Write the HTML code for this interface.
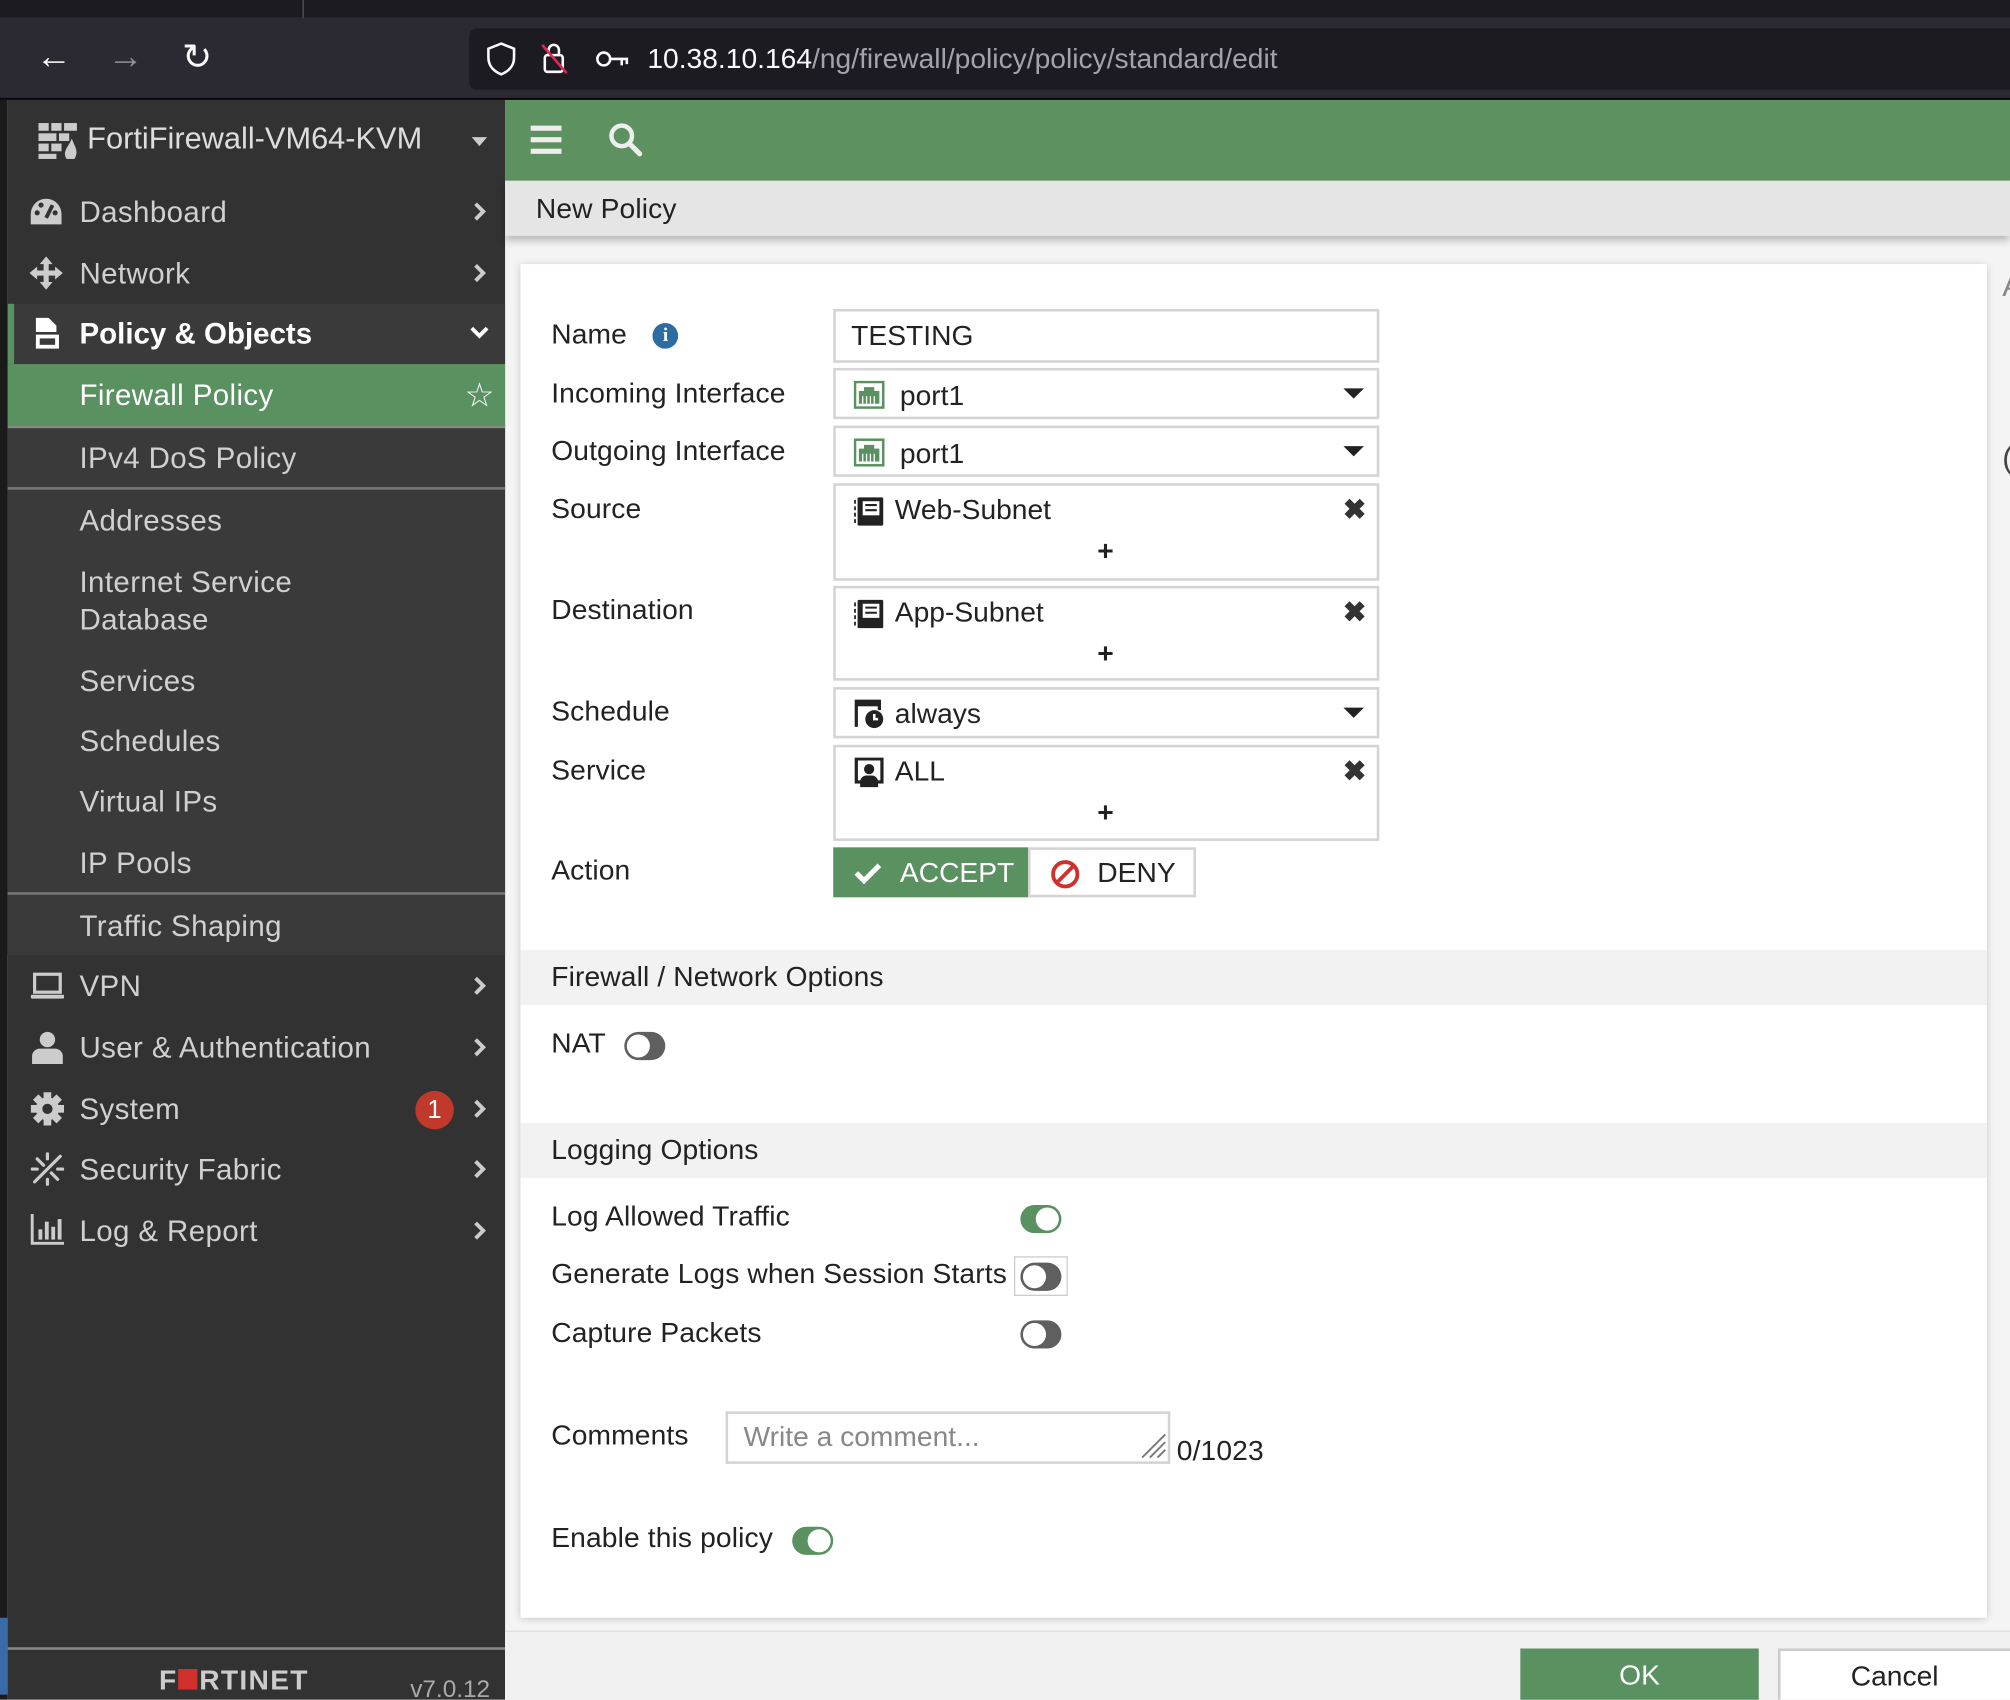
<!DOCTYPE html>
<html><head><meta charset="utf-8"><style>
*{box-sizing:border-box;margin:0;padding:0}
html,body{width:2010px;height:1700px;overflow:hidden;background:#f4f4f4}
#w{width:1568px;height:1326px;position:relative;transform:scale(1.28189);transform-origin:0 0;font-family:"Liberation Sans",sans-serif;overflow:hidden;background:#f4f4f4}
.a{position:absolute}
.sb{color:#d0d0d0;font-size:23px;letter-spacing:0.3px}
.mi{position:absolute;left:6px;width:388px;height:48px;line-height:48px}
.mi .t{position:absolute;left:56px}
.mi .ch{position:absolute;right:14px;top:16px;width:12px;height:16px}
.lbl{position:absolute;left:430px;font-size:22px;color:#222;letter-spacing:0.1px}
.inp{position:absolute;left:650px;width:426px;border:2px solid #d4d4d4;background:#fff;font-size:22px;color:#222}
.tg{position:absolute;width:32px;height:22px;border-radius:11px}
.tg.on{background:#5a9160}
.tg.on:after{content:"";position:absolute;right:2px;top:2px;width:18px;height:18px;border-radius:50%;background:#fff}
.tg.off{background:#5f5f5f}
.tg.off:after{content:"";position:absolute;left:2px;top:2px;width:18px;height:18px;border-radius:50%;background:#fff}
.caret{position:absolute;right:10px;top:14px;width:0;height:0;border-left:8px solid transparent;border-right:8px solid transparent;border-top:8px solid #222}
.x{position:absolute;right:8px;top:6px;font-size:22px;font-weight:bold;color:#333}
.plus{position:absolute;left:204px;top:38px;font-size:22px;font-weight:bold;color:#222}
</style></head><body><div id="w">
<div class="a" style="left:0;top:0;width:1568px;height:14px;background:#1c1b22"></div>
<div class="a" style="left:236px;top:0;width:1px;height:14px;background:#555"></div>
<div class="a" style="left:0;top:14px;width:1568px;height:62px;background:#2b2a33"></div>
<div class="a" style="left:0;top:76px;width:1568px;height:2px;background:#0c0c0d"></div>
<div class="a" style="left:28px;top:28px;color:#fbfbfe;font-size:28px">&#8592;</div>
<div class="a" style="left:84px;top:28px;color:#8f8f9d;font-size:28px">&#8594;</div>
<div class="a" style="left:142px;top:28px;color:#fbfbfe;font-size:28px">&#8635;</div>
<div class="a" style="left:366px;top:22px;width:1210px;height:48px;background:#1c1b22;border-radius:6px"></div>
<svg class="a" style="left:378px;top:32px" width="26" height="28" viewBox="0 0 26 28"><path d="M13 2 L23 6 V13 C23 20 18 24 13 26 C8 24 3 20 3 13 V6 Z" fill="none" stroke="#fbfbfe" stroke-width="2"/></svg>
<svg class="a" style="left:420px;top:31px" width="26" height="28" viewBox="0 0 26 28"><rect x="5" y="12" width="14" height="13" rx="2" fill="none" stroke="#fbfbfe" stroke-width="2"/><path d="M8 12 V8 a4 4 0 0 1 8 0 V12" fill="none" stroke="#fbfbfe" stroke-width="2"/><path d="M3 4 L22 26" stroke="#e22850" stroke-width="2"/></svg>
<svg class="a" style="left:464px;top:36px" width="28" height="20" viewBox="0 0 28 20"><circle cx="7" cy="10" r="5" fill="none" stroke="#fbfbfe" stroke-width="2"/><path d="M12 10 H26 M21 10 V15 M25 10 V14" stroke="#fbfbfe" stroke-width="2"/></svg>
<div class="a" style="left:505px;top:33px;font-size:22px;color:#fbfbfe;letter-spacing:0px">10.38.10.164<span style="color:#a3a3ad">/ng/firewall/policy/policy/standard/edit</span></div>
<div class="a" style="left:0;top:78px;width:6px;height:1248px;background:#1a1a1a"></div>
<div class="a" style="left:0;top:1262px;width:6px;height:60px;background:#3b6aa8"></div>
<div class="a sb" style="left:6px;top:78px;width:388px;height:1248px;background:#323232"></div>
<div class="a" style="left:6px;top:332px;width:388px;height:413px;background:#3a3a3a"></div>
<div class="a" style="left:6px;top:237px;width:388px;height:47px;background:#3a3a3a"></div>
<div class="a" style="left:6px;top:237px;width:5px;height:47px;background:#5a9160"></div>
<div class="a" style="left:6px;top:284px;width:388px;height:48px;background:#5a9160"></div>
<div class="a" style="left:6px;top:332px;width:388px;height:2px;background:#888"></div>
<div class="a" style="left:6px;top:380px;width:388px;height:2px;background:#777"></div>
<div class="a" style="left:6px;top:696px;width:388px;height:2px;background:#777"></div>
<svg class="a" style="left:30px;top:96px" width="32" height="28" viewBox="0 0 32 28"><g fill="#ccc"><rect x="0" y="0" width="8" height="6"/><rect x="10" y="0" width="8" height="6"/><rect x="20" y="0" width="10" height="6"/><rect x="0" y="8" width="14" height="6"/><rect x="16" y="8" width="8" height="6"/><rect x="0" y="16" width="8" height="6"/><rect x="10" y="16" width="8" height="6"/><rect x="0" y="24" width="14" height="4"/></g><path d="M22 28 C18 22 24 18 26 12 C28 18 32 22 28 28Z" fill="#ccc"/></svg>
<div class="a sb" style="left:68px;top:95px;font-size:24px;color:#ddd;letter-spacing:0">FortiFirewall-VM64-KVM</div>
<div class="a" style="left:368px;top:107px;border-left:6px solid transparent;border-right:6px solid transparent;border-top:7px solid #ccc"></div>
<div class="sb">
<div class="mi" style="top:141px"><svg class="a" style="left:17px;top:13px" width="26" height="22" viewBox="0 0 26 22"><path d="M13 1 A12 12 0 0 0 1 13 V21 H25 V13 A12 12 0 0 0 13 1Z" fill="#ccc"/><path d="M13 16 L18 6" stroke="#323232" stroke-width="3"/><circle cx="6" cy="12" r="2" fill="#323232"/><circle cx="9" cy="6" r="2" fill="#323232"/><circle cx="20" cy="12" r="2" fill="#323232"/></svg><span class="t">Dashboard</span><svg class="ch" viewBox="0 0 12 16"><path d="M3 2 L9 8 L3 14" fill="none" stroke="#ccc" stroke-width="3"/></svg></div>
<div class="mi" style="top:189px"><svg class="a" style="left:17px;top:11px" width="26" height="26" viewBox="0 0 26 26"><path d="M13 0 L18 6 H15 V11 H20 V8 L26 13 L20 18 V15 H15 V20 H18 L13 26 L8 20 H11 V15 H6 V18 L0 13 L6 8 V11 H11 V6 H8Z" fill="#ccc"/></svg><span class="t">Network</span><svg class="ch" viewBox="0 0 12 16"><path d="M3 2 L9 8 L3 14" fill="none" stroke="#ccc" stroke-width="3"/></svg></div>
<div class="mi" style="top:236px;color:#fff;font-weight:bold;letter-spacing:0"><svg class="a" style="left:20px;top:11px" width="22" height="26" viewBox="0 0 22 26"><path d="M2 1 H12 L18 7 V12 H2Z M2 14 H20 V25 H2Z" fill="#fff"/><rect x="5" y="17" width="12" height="5" fill="#3a3a3a"/></svg><span class="t">Policy &amp; Objects</span><svg class="a" style="right:12px;top:17px" width="16" height="12" viewBox="0 0 16 12"><path d="M2 3 L8 9 L14 3" fill="none" stroke="#fff" stroke-width="3"/></svg></div>
<div class="mi" style="top:284px;color:#fff"><span class="t">Firewall Policy</span><span class="a" style="right:8px;top:0;font-size:26px">&#9734;</span></div>
<div class="mi" style="top:333px"><span class="t">IPv4 DoS Policy</span></div>
<div class="mi" style="top:382px"><span class="t">Addresses</span></div>
<div class="mi" style="top:440px;line-height:29px;height:60px"><span class="t">Internet Service<br>Database</span></div>
<div class="mi" style="top:507px"><span class="t">Services</span></div>
<div class="mi" style="top:554px"><span class="t">Schedules</span></div>
<div class="mi" style="top:601px"><span class="t">Virtual IPs</span></div>
<div class="mi" style="top:649px"><span class="t">IP Pools</span></div>
<div class="mi" style="top:698px"><span class="t">Traffic Shaping</span></div>
<div class="mi" style="top:745px"><svg class="a" style="left:18px;top:13px" width="26" height="22" viewBox="0 0 26 22"><rect x="3" y="2" width="20" height="14" fill="none" stroke="#ccc" stroke-width="2.5"/><rect x="0" y="18" width="26" height="3" rx="1" fill="#ccc"/></svg><span class="t">VPN</span><svg class="ch" viewBox="0 0 12 16"><path d="M3 2 L9 8 L3 14" fill="none" stroke="#ccc" stroke-width="3"/></svg></div>
<div class="mi" style="top:793px"><svg class="a" style="left:18px;top:11px" width="26" height="26" viewBox="0 0 26 26"><circle cx="13" cy="7" r="6" fill="#ccc"/><path d="M1 26 V20 A6 6 0 0 1 7 14 H19 A6 6 0 0 1 25 20 V26Z" fill="#ccc"/></svg><span class="t">User &amp; Authentication</span><svg class="ch" viewBox="0 0 12 16"><path d="M3 2 L9 8 L3 14" fill="none" stroke="#ccc" stroke-width="3"/></svg></div>
<div class="mi" style="top:841px"><svg class="a" style="left:18px;top:11px" width="26" height="26" viewBox="0 0 26 26"><g fill="#ccc"><circle cx="13" cy="13" r="9"/><rect x="10" y="0" width="6" height="26"/><rect x="0" y="10" width="26" height="6"/><rect x="10" y="0" width="6" height="26" transform="rotate(45 13 13)"/><rect x="10" y="0" width="6" height="26" transform="rotate(-45 13 13)"/></g><circle cx="13" cy="13" r="4" fill="#323232"/></svg><span class="t">System</span><span class="a" style="left:318px;top:10px;width:30px;height:30px;border-radius:50%;background:#c0392b;color:#fff;text-align:center;line-height:30px;font-size:20px;letter-spacing:0">1</span><svg class="ch" viewBox="0 0 12 16"><path d="M3 2 L9 8 L3 14" fill="none" stroke="#ccc" stroke-width="3"/></svg></div>
<div class="mi" style="top:888px"><svg class="a" style="left:18px;top:11px" width="26" height="26" viewBox="0 0 26 26"><g stroke="#ccc" stroke-width="2.5" stroke-linecap="round"><path d="M3 23 L23 3 M5 5 L10 10 M16 16 L21 21 M13 1 V5 M1 13 H5 M21 13 H25 M13 21 V25"/></g></svg><span class="t">Security Fabric</span><svg class="ch" viewBox="0 0 12 16"><path d="M3 2 L9 8 L3 14" fill="none" stroke="#ccc" stroke-width="3"/></svg></div>
<div class="mi" style="top:936px"><svg class="a" style="left:18px;top:11px" width="26" height="24" viewBox="0 0 26 24"><path d="M1 0 V23 H26" fill="none" stroke="#ccc" stroke-width="2.5"/><g fill="#ccc"><rect x="6" y="12" width="3" height="8"/><rect x="11" y="6" width="3" height="14"/><rect x="16" y="10" width="3" height="10"/><rect x="21" y="4" width="3" height="16"/></g></svg><span class="t">Log &amp; Report</span><svg class="ch" viewBox="0 0 12 16"><path d="M3 2 L9 8 L3 14" fill="none" stroke="#ccc" stroke-width="3"/></svg></div>
</div>
<div class="a" style="left:6px;top:1285px;width:388px;height:2px;background:#888"></div>
<div class="a" style="left:124px;top:1298px;font-size:22px;font-weight:bold;color:#ccc;letter-spacing:1px">F<span style="display:inline-block;width:15px;height:16px;background:#d0312d;margin:0 1px"></span>RTINET</div>
<div class="a" style="left:320px;top:1308px;font-size:19px;color:#aaa">v7.0.12</div>
<div class="a" style="left:394px;top:78px;width:1174px;height:63px;background:#5d9160"></div>
<div class="a" style="left:414px;top:98px;width:24px;height:4px;background:#eee;box-shadow:0 9px 0 #eee,0 18px 0 #eee"></div>
<svg class="a" style="left:474px;top:95px" width="28" height="28" viewBox="0 0 28 28"><circle cx="11" cy="11" r="8" fill="none" stroke="#eee" stroke-width="3.5"/><path d="M17 17 L25 25" stroke="#eee" stroke-width="4" stroke-linecap="round"/></svg>
<div class="a" style="left:394px;top:141px;width:1174px;height:43px;background:#e5e5e5;box-shadow:0 4px 6px rgba(0,0,0,.25)"></div>
<div class="a" style="left:418px;top:150px;font-size:22px;color:#222;letter-spacing:0.1px">New Policy</div>
<div class="a" style="left:406px;top:206px;width:1144px;height:1056px;background:#fff;box-shadow:0 1px 6px rgba(0,0,0,.2)"></div>
<div class="a" style="left:1562px;top:210px;font-size:24px;color:#888">A</div>
<div class="a" style="left:1562px;top:344px;font-size:24px;color:#444">(</div>
<div class="lbl" style="top:248px">Name <span style="display:inline-block;width:20px;height:20px;border-radius:50%;background:#2d6ca2;color:#fff;font-size:15px;font-weight:bold;text-align:center;line-height:20px;vertical-align:2px;margin-left:14px;font-family:'Liberation Serif',serif">i</span></div>
<div class="inp" style="top:241px;height:42px;padding:6px 12px">TESTING</div>
<div class="lbl" style="top:294px">Incoming Interface</div>
<div class="inp" style="top:287px;height:40px"><svg class="a" style="left:14px;top:8px" width="24" height="22" viewBox="0 0 24 22"><rect x="1" y="1" width="22" height="20" fill="#fff" stroke="#5a9160" stroke-width="2"/><path d="M4 8 H8 V5 H16 V8 H20 V18 H4Z" fill="#5a9160"/><path d="M7 12 V18 M10 12 V18 M13 12 V18 M16 12 V18" stroke="#fff" stroke-width="1"/></svg><span class="a" style="left:50px;top:7px">port1</span><span class="caret"></span></div>
<div class="lbl" style="top:339px">Outgoing Interface</div>
<div class="inp" style="top:332px;height:40px"><svg class="a" style="left:14px;top:8px" width="24" height="22" viewBox="0 0 24 22"><rect x="1" y="1" width="22" height="20" fill="#fff" stroke="#5a9160" stroke-width="2"/><path d="M4 8 H8 V5 H16 V8 H20 V18 H4Z" fill="#5a9160"/><path d="M7 12 V18 M10 12 V18 M13 12 V18 M16 12 V18" stroke="#fff" stroke-width="1"/></svg><span class="a" style="left:50px;top:7px">port1</span><span class="caret"></span></div>
<div class="lbl" style="top:384px">Source</div>
<div class="inp" style="top:377px;height:76px"><svg class="a" style="left:14px;top:8px" width="24" height="24" viewBox="0 0 24 24"><rect x="3" y="1" width="20" height="22" rx="1" fill="#222"/><rect x="7" y="4" width="13" height="11" fill="#fff"/><path d="M9 7 H18 M9 11 H18" stroke="#222" stroke-width="1.6"/><path d="M1 3 V21" stroke="#222" stroke-width="1.4" stroke-dasharray="3 2"/></svg><span class="a" style="left:46px;top:6px">Web-Subnet</span><span class="x">&#10006;</span><span class="plus">+</span></div>
<div class="lbl" style="top:463px">Destination</div>
<div class="inp" style="top:457px;height:74px"><svg class="a" style="left:14px;top:8px" width="24" height="24" viewBox="0 0 24 24"><rect x="3" y="1" width="20" height="22" rx="1" fill="#222"/><rect x="7" y="4" width="13" height="11" fill="#fff"/><path d="M9 7 H18 M9 11 H18" stroke="#222" stroke-width="1.6"/><path d="M1 3 V21" stroke="#222" stroke-width="1.4" stroke-dasharray="3 2"/></svg><span class="a" style="left:46px;top:6px">App-Subnet</span><span class="x">&#10006;</span><span class="plus">+</span></div>
<div class="lbl" style="top:542px">Schedule</div>
<div class="inp" style="top:536px;height:40px"><svg class="a" style="left:14px;top:7px" width="24" height="24" viewBox="0 0 24 24"><path d="M2 22 V2 H20 V9" fill="none" stroke="#222" stroke-width="2.5"/><rect x="2" y="2" width="18" height="4" fill="#222"/><circle cx="16" cy="16" r="7" fill="#222"/><path d="M16 12 V16 H19" stroke="#fff" stroke-width="2" fill="none"/></svg><span class="a" style="left:46px;top:6px">always</span><span class="caret"></span></div>
<div class="lbl" style="top:588px">Service</div>
<div class="inp" style="top:581px;height:75px"><svg class="a" style="left:14px;top:8px" width="24" height="24" viewBox="0 0 24 24"><rect x="2" y="1" width="20" height="18" fill="none" stroke="#222" stroke-width="2.5"/><circle cx="12" cy="9" r="4" fill="#222"/><path d="M5 23 V19 A5 5 0 0 1 10 14 H14 A5 5 0 0 1 19 19 V23Z" fill="#222"/></svg><span class="a" style="left:46px;top:6px">ALL</span><span class="x">&#10006;</span><span class="plus">+</span></div>
<div class="lbl" style="top:666px">Action</div>
<div class="a" style="left:650px;top:661px;width:153px;height:39px;background:#5a9160;color:#fff;font-size:22px;line-height:39px"><svg class="a" style="left:16px;top:11px" width="22" height="18" viewBox="0 0 22 18"><path d="M2 9 L8 15 L20 3" fill="none" stroke="#fff" stroke-width="4"/></svg><span class="a" style="left:52px">ACCEPT</span></div>
<div class="a" style="left:802px;top:661px;width:131px;height:39px;border:2px solid #d4d4d4;background:#fff;font-size:22px;line-height:35px;color:#222"><svg class="a" style="left:15px;top:7px" width="24" height="24" viewBox="0 0 24 24"><circle cx="12" cy="12" r="9.5" fill="none" stroke="#d0312d" stroke-width="3"/><path d="M5 19 L19 5" stroke="#d0312d" stroke-width="3"/></svg><span class="a" style="left:52px">DENY</span></div>
<div class="a" style="left:406px;top:741px;width:1144px;height:43px;background:#f2f2f2"></div>
<div class="lbl" style="top:749px">Firewall / Network Options</div>
<div class="lbl" style="top:801px">NAT</div>
<div class="tg off" style="left:487px;top:805px"></div>
<div class="a" style="left:406px;top:876px;width:1144px;height:43px;background:#f2f2f2"></div>
<div class="lbl" style="top:884px">Logging Options</div>
<div class="lbl" style="top:936px">Log Allowed Traffic</div>
<div class="tg on" style="left:796px;top:940px"></div>
<div class="lbl" style="top:981px">Generate Logs when Session Starts</div>
<div class="a" style="left:791px;top:980px;width:42px;height:31px;border:1px solid #ccc"></div>
<div class="tg off" style="left:796px;top:985px"></div>
<div class="lbl" style="top:1027px">Capture Packets</div>
<div class="tg off" style="left:796px;top:1030px"></div>
<div class="lbl" style="top:1107px">Comments</div>
<div class="a" style="left:566px;top:1101px;width:347px;height:41px;border:2px solid #d4d4d4;background:#fff;font-size:22px;color:#888;padding:5px 12px">Write a comment...</div>
<svg class="a" style="left:889px;top:1117px" width="22" height="22" viewBox="0 0 22 22"><path d="M2 20 L20 2 M8 20 L20 8 M14 20 L20 14" stroke="#777" stroke-width="1.5"/></svg>
<div class="lbl" style="left:918px;top:1119px">0/1023</div>
<div class="lbl" style="top:1187px">Enable this policy</div>
<div class="tg on" style="left:618px;top:1191px"></div>
<div class="a" style="left:394px;top:1272px;width:1174px;height:54px;background:#f0f0f0;border-top:1px solid #ddd"></div>
<div class="a" style="left:1186px;top:1286px;width:186px;height:42px;background:#5a9160;color:#fff;font-size:22px;text-align:center;line-height:42px">OK</div>
<div class="a" style="left:1387px;top:1286px;width:190px;height:42px;background:#fff;border:2px solid #ccc;color:#222;font-size:22px;text-align:center;line-height:40px;padding-right:8px">Cancel</div>
</div></body></html>
